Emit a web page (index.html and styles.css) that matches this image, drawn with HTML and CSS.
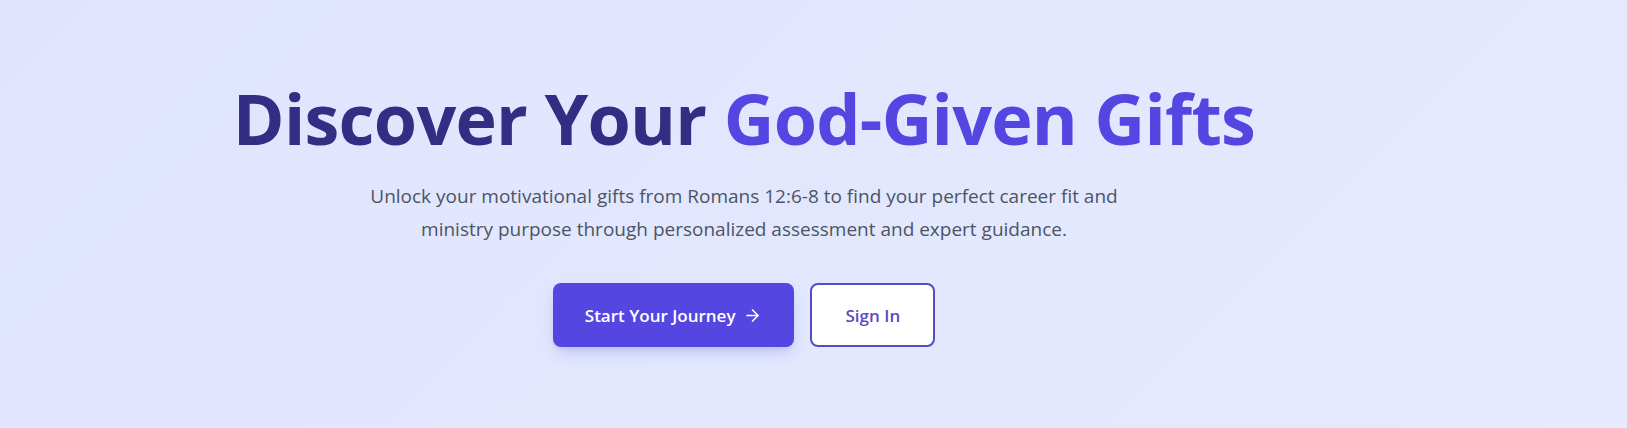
FILE: index.html
```html
<!DOCTYPE html>
<html lang="en">
<head>
<meta charset="utf-8">
<title>Discover Your God-Given Gifts</title>
<link rel="stylesheet" href="styles.css">
</head>
<body>
<section class="hero">
  <div class="hero-inner">
    <h1 class="title"><span class="title-dark">Discover Your</span> <span class="title-accent">God-Given Gifts</span></h1>
    <p class="lead">Unlock your motivational gifts from Romans 12:6-8 to find your perfect career fit and ministry purpose through personalized assessment and expert guidance.</p>
    <div class="actions">
      <a class="btn btn-primary" href="#">Start Your Journey
        <svg class="arrow" viewBox="0 0 24 24" width="19" height="19" fill="none" stroke="currentColor" stroke-width="2" stroke-linecap="round" stroke-linejoin="round"><path d="M5 12h14"/><path d="M12 5l7 7-7 7"/></svg>
      </a>
      <a class="btn btn-outline" href="#">Sign In</a>
    </div>
  </div>
</section>
</body>
</html>
```
FILE: styles.css
```css
* { box-sizing: border-box; }
html, body { margin: 0; padding: 0; }
body {
  font-family: "Open Sans", "Noto Sans", "Liberation Sans", sans-serif;
  background: linear-gradient(135deg, #e0e4ff 0%, #e3e8fe 60%, #e5eafe 100%);
  min-height: 428px;
}
.hero {
  height: 428px;
  padding-right: 139px;
}
.hero-inner {
  display: flex;
  flex-direction: column;
  align-items: center;
  text-align: center;
  padding-top: 80px;
}
.title {
  margin: 0;
  font-size: 70px;
  line-height: 1.1;
  font-weight: 700;
  letter-spacing: -0.75px;
}
.title-dark { color: #342d84; }
.title-accent { color: #5546e2; }
.lead {
  margin: 23px 0 0;
  max-width: 760px;
  font-size: 19px;
  line-height: 33px;
  color: #4b5563;
}
.actions {
  display: flex;
  gap: 16px;
  margin-top: 37px;
}
.btn {
  display: inline-flex;
  align-items: center;
  justify-content: center;
  gap: 8px;
  height: 64px;
  padding: 0 32px;
  border-radius: 8px;
  font-size: 17px;
  font-weight: 600;
  text-decoration: none;
}
.btn-primary {
  background: #5546e2;
  color: #ffffff;
  box-shadow: 0 8px 16px -4px rgba(79, 70, 229, 0.25), 0 4px 6px -2px rgba(0, 0, 0, 0.06);
}
.btn-outline {
  background: #ffffff;
  color: #5a4bc2;
  border: 2px solid #5a4bc2;
  padding: 0 33px;
}
.arrow { display: block; }
```
